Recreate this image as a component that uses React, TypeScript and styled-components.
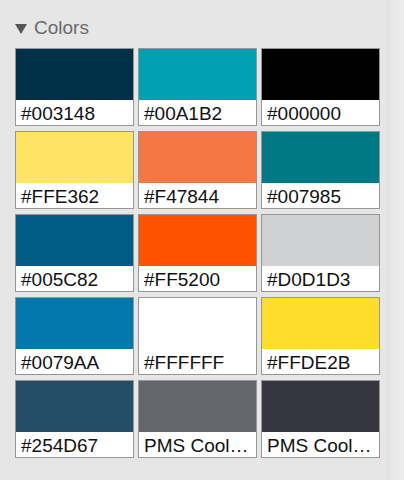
import React from "react";
import styled, { createGlobalStyle } from "styled-components";

const Global = createGlobalStyle`
  html, body { margin: 0; padding: 0; }
  body { background: #e6e6e6; font-family: "Liberation Sans", Arial, sans-serif; }
`;

const Page = styled.div`
  display: flex;
  width: 404px;
  height: 480px;
  overflow: hidden;
  background: #e6e6e6;
`;

const Panel = styled.div`
  flex: 1;
  padding: 17px 0 0 15px;
`;

const Edge = styled.div`
  width: 17px;
  background: linear-gradient(to right, #e0e0e0 0px, #e6e6e6 4px, #eaeaea 8px, #ececec 100%);
`;

const Header = styled.div`
  display: flex;
  align-items: center;
  gap: 7px;
  height: 22px;
  color: #6a6a6a;
  font-size: 19px;
  margin-bottom: 9px;
`;

const Triangle = styled.span`
  width: 0;
  height: 0;
  border-left: 6px solid transparent;
  border-right: 6px solid transparent;
  border-top: 10px solid #555;
  margin-top: 1px;
`;

const Grid = styled.div`
  display: grid;
  grid-template-columns: repeat(3, 119px);
  grid-auto-rows: 78px;
  column-gap: 4px;
  row-gap: 5px;
`;

const Tile = styled.div`
  display: flex;
  flex-direction: column;
  border: 1.5px solid #979797;
  background: #fff;
  box-sizing: border-box;
`;

const Swatch = styled.div<{ $c: string }>`
  height: 51px;
  background: ${(p) => p.$c};
`;

const Label = styled.div`
  flex: 1;
  display: flex;
  align-items: center;
  padding: 3px 0 0 5px;
  font-size: 19px;
  color: #111;
  white-space: nowrap;
  overflow: hidden;
`;

const colors: [string, string][] = [
  ["#003148", "#003148"],
  ["#00A1B2", "#00A1B2"],
  ["#000000", "#000000"],
  ["#FFE362", "#FFE362"],
  ["#F47844", "#F47844"],
  ["#007985", "#007985"],
  ["#005C82", "#005C82"],
  ["#FF5200", "#FF5200"],
  ["#D0D1D3", "#D0D1D3"],
  ["#0079AA", "#0079AA"],
  ["#FFFFFF", "#FFFFFF"],
  ["#FFDE2B", "#FFDE2B"],
  ["#254D67", "#254D67"],
  ["#63666A", "PMS Cool…"],
  ["#35363F", "PMS Cool…"],
];

export default function App() {
  return (
    <Page>
      <Global />
      <Panel>
        <Header>
          <Triangle />
          <span>Colors</span>
        </Header>
        <Grid>
          {colors.map(([c, l], i) => (
            <Tile key={i}>
              <Swatch $c={c} />
              <Label>{l}</Label>
            </Tile>
          ))}
        </Grid>
      </Panel>
      <Edge />
    </Page>
  );
}
